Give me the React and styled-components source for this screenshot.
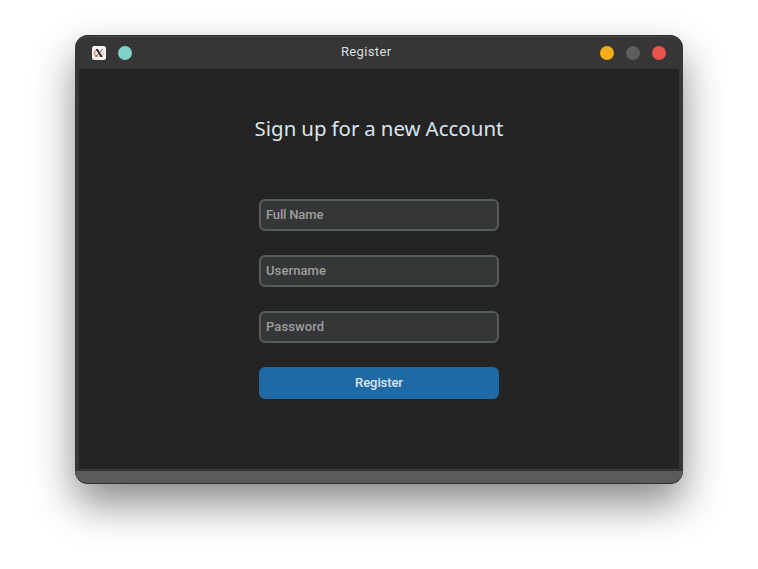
import React from "react";
import styled, { createGlobalStyle } from "styled-components";

const GlobalStyle = createGlobalStyle`
  * { box-sizing: border-box; }
  body { margin: 0; background: #fff; overflow: hidden; }
`;

const Desktop = styled.main`
  width: 758px;
  height: 569px;
  padding: 35px 75px;
  background: #fff;
`;

const Window = styled.section`
  display: flex;
  flex-direction: column;
  width: 608px;
  height: 449px;
  border-radius: 13px;
  overflow: hidden;
  background: #363636;
  box-shadow: 0 20px 42px rgba(0, 0, 0, 0.46);
  font-family: Roboto, sans-serif;
`;

const TitleBar = styled.header`
  display: grid;
  grid-template-columns: 249px 1fr auto;
  align-items: center;
  height: 34px;
  flex: none;
  padding: 0 17px 0;
  border-top: 1px solid #2c2c2c;
  box-shadow: inset 0 1px #4b4b4b;
  border-radius: 13px 13px 0 0;
`;

const Controls = styled.div`
  display: flex;
  gap: 12px;
  justify-content: ${(p) => (p.$end ? "flex-end" : "flex-start")};
`;

const Dot = styled.button`
  width: 14px;
  height: 14px;
  padding: 0;
  border: 0;
  border-radius: 50%;
  background: ${(p) => p.$color};
`;

const AppIcon = styled.svg`
  display: block;
  width: 14px;
  height: 14px;
`;

const Title = styled.div`
  margin-top: -2px;
  color: #dedede;
  font-size: 13px;
  line-height: 16px;
  letter-spacing: 0.35px;
`;

const Content = styled.div`
  display: flex;
  flex-direction: column;
  align-items: center;
  width: 600px;
  height: 400px;
  flex: none;
  margin: 0 4px;
  padding-top: 45px;
  background: #242424;
`;

const Heading = styled.h1`
  margin: 0 0 57px;
  color: #dce4ee;
  font: 400 20.4px/28px "Noto Sans", sans-serif;
  letter-spacing: 0.05px;
  word-spacing: -0.4px;
  white-space: nowrap;
`;

const Form = styled.form`
  display: flex;
  flex-direction: column;
  gap: 24px;
  width: 240px;
`;

const Field = styled.input`
  height: 32px;
  padding: 0 5px 1px;
  border: 2px solid #565b5e;
  border-radius: 6px;
  outline: 0;
  background: #343638;
  color: #dce4ee;
  font: 500 13px Roboto, sans-serif;
  letter-spacing: ${(p) => p.$tracking}px;
  &::placeholder { color: #9e9e9e; opacity: 1; }
`;

const Submit = styled.button`
  height: 32px;
  padding: 0 0 1px;
  border: 0;
  border-radius: 6px;
  background: #1f6aa5;
  color: #dce4ee;
  font: 500 13px Roboto, sans-serif;
  letter-spacing: -0.08px;
`;

const BottomEdge = styled.footer`
  height: 13px;
  margin-top: 2px;
  background: #5b5b5b;
  border-bottom: 1px solid #2c2c2c;
  border-radius: 0 0 13px 13px;
`;

const fields = [
  { label: "Full Name", type: "text", tracking: -0.16 },
  { label: "Username", type: "text", tracking: 0.1 },
  { label: "Password", type: "password", tracking: 0.1 },
];

export default function App() {
  return (
    <Desktop>
      <GlobalStyle />
      <Window>
        <TitleBar>
          <Controls>
            <AppIcon viewBox="0 0 14 14" aria-hidden="true">
              <rect width="14" height="14" rx="2.5" fill="#f5f3f1" />
              <path d="M5.2 4.2C2.6 5.2 1.8 7 2.5 8.3c.5 1 1.6 1.6 3 1.9" fill="none" stroke="#dc7f58" strokeWidth="1.2" />
              <path d="M5.5 10.3c3 .5 6-.8 6.3-2.9.1-1-.4-1.8-1.4-2.3" fill="none" stroke="#e3b391" strokeWidth="1" />
              <path d="M3.6 3h2.2l5 8H8.6z" fill="#222" />
              <path d="M10.5 3 7.7 6.6M6.4 7.7 3.6 11" stroke="#333" strokeWidth="0.8" />
            </AppIcon>
            <Dot type="button" aria-label="Pin" $color="#7fd2c9" />
          </Controls>
          <Title>Register</Title>
          <Controls $end>
            <Dot type="button" aria-label="Minimize" $color="#f2ae1b" />
            <Dot type="button" aria-label="Maximize" $color="#5d5d5d" />
            <Dot type="button" aria-label="Close" $color="#ea524b" />
          </Controls>
        </TitleBar>
        <Content>
          <Heading>Sign up for a new Account</Heading>
          <Form onSubmit={(e) => e.preventDefault()}>
            {fields.map((f) => (
              <Field key={f.label} type={f.type} placeholder={f.label} $tracking={f.tracking} />
            ))}
            <Submit type="submit">Register</Submit>
          </Form>
        </Content>
        <BottomEdge />
      </Window>
    </Desktop>
  );
}
